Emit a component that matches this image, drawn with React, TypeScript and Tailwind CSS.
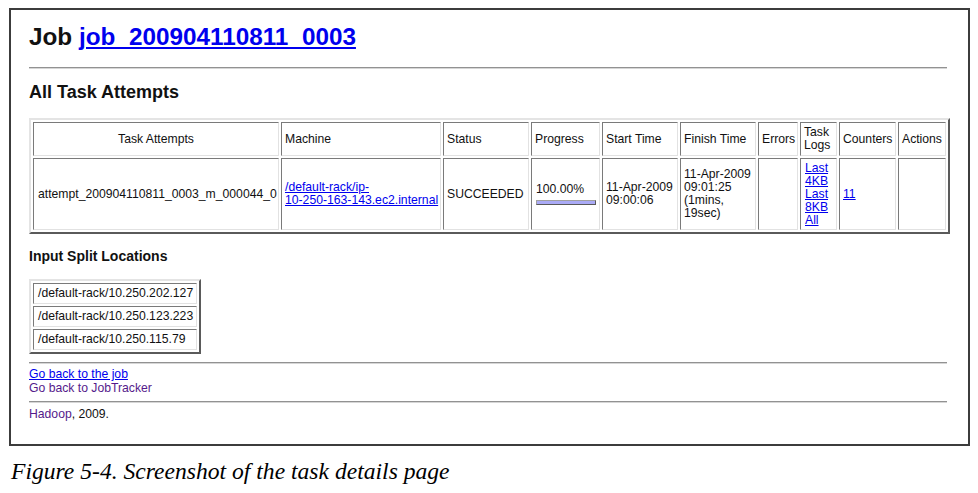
const cell =
  'border border-t-[#7a7a7a] border-l-[#7a7a7a] border-b-[#e2e2e2] border-r-[#e2e2e2] px-[3px] align-middle whitespace-nowrap'

const tableFrame =
  'border-separate border-spacing-[2px] border-2 border-t-[#e4e4e4] border-l-[#e4e4e4] border-b-[#5a5a5a] border-r-[#5a5a5a]'

const link = 'text-[#0000ee] underline'

const headers = [
  { label: 'Task Attempts', w: 'w-[246px]', center: true },
  { label: 'Machine', w: 'w-[160px]' },
  { label: 'Status', w: 'w-[86px]' },
  { label: 'Progress', w: 'w-[69px]' },
  { label: 'Start Time', w: 'w-[76px]' },
  { label: 'Finish Time', w: 'w-[76px]' },
  { label: 'Errors', w: 'w-[40px]' },
  { label: 'Task Logs', w: 'w-[37px]', wrap: true },
  { label: 'Counters', w: 'w-[57px]' },
  { label: 'Actions', w: 'w-[48px]' },
]

const splits = [
  '/default-rack/10.250.202.127',
  '/default-rack/10.250.123.223',
  '/default-rack/10.250.115.79',
]

function Rule() {
  return <div className="h-0 border-t border-b border-t-[#929292] border-b-[#d6d6d6]" />
}

export default function App() {
  return (
    <div className="min-h-screen bg-white pl-[9px] pt-[8px] font-['Liberation_Sans',Arial,sans-serif] text-[#111]">
      <div className="w-[961px] border-2 border-[#3c3c3c] pl-[18px] pr-[21px] pt-[13px] pb-[23px]">
        <h1 className="text-[24.3px] font-bold leading-[28px]">
          Job <a className={link}>job_200904110811_0003</a>
        </h1>

        <div className="mt-[16px]">
          <Rule />
        </div>

        <h2 className="mt-[12px] text-[18px] font-bold leading-[22px]">All Task Attempts</h2>

        <table className={`mt-[15px] w-[921px] table-fixed text-[12.2px] leading-[13px] ${tableFrame}`}>
          <thead>
            <tr>
              {headers.map((h) => (
                <th
                  key={h.label}
                  className={`${cell} ${h.w} h-[34px] font-normal ${h.center ? 'text-center' : 'text-left'} ${
                    h.wrap ? 'whitespace-normal' : ''
                  }`}
                >
                  {h.wrap ? (
                    <>
                      Task
                      <br />
                      Logs
                    </>
                  ) : (
                    h.label
                  )}
                </th>
              ))}
            </tr>
          </thead>
          <tbody>
            <tr>
              <td className={`${cell} h-[72px] pl-[4px]`}>attempt_200904110811_0003_m_000044_0</td>
              <td className={cell}>
                <a className={link}>
                  /default-rack/ip-
                  <br />
                  10-250-163-143.ec2.internal
                </a>
              </td>
              <td className={cell}>SUCCEEDED</td>
              <td className={`${cell} pl-[4px]`}>
                <div>100.00%</div>
                <div className="mt-[4px] w-[60px] h-[5px] border border-t-[#a0a0a0] border-l-[#a0a0a0] border-b-[#5a5a5a] border-r-[#5a5a5a] bg-[#aaaaf6]" />
              </td>
              <td className={cell}>
                11-Apr-2009
                <br />
                09:00:06
              </td>
              <td className={cell}>
                11-Apr-2009
                <br />
                09:01:25
                <br />
                (1mins,
                <br />
                19sec)
              </td>
              <td className={cell} />
              <td className={`${cell} pl-[4px]`}>
                <a className={link}>
                  Last
                  <br />
                  4KB
                </a>
                <br />
                <a className={link}>
                  Last
                  <br />
                  8KB
                </a>
                <br />
                <a className={link}>All</a>
              </td>
              <td className={cell}>
                <a className={link}>11</a>
              </td>
              <td className={cell} />
            </tr>
          </tbody>
        </table>

        <h3 className="mt-[13px] text-[14px] font-bold leading-[18px]">Input Split Locations</h3>

        <table className={`mt-[14px] text-[12.2px] leading-[13px] ${tableFrame}`}>
          <tbody>
            {splits.map((s) => (
              <tr key={s}>
                <td className={`${cell} w-[164px] h-[21px] pl-[4px]`}>{s}</td>
              </tr>
            ))}
          </tbody>
        </table>

        <div className="mt-[8px]">
          <Rule />
        </div>

        <div className="mt-[3px] text-[12.2px] leading-[14px]">
          <div>
            <a className={link}>Go back to the job</a>
          </div>
          <div>
            <a className="text-[#551a8b]">Go back to JobTracker</a>
          </div>
        </div>

        <div className="mt-[6px]">
          <Rule />
        </div>

        <p className="mt-[4px] text-[12.2px] leading-[14px]">
          <a className="text-[#551a8b]">Hadoop</a>, 2009.
        </p>
      </div>

      <p className="ml-[2px] mt-[11px] font-['Liberation_Serif',serif] text-[23.6px] italic leading-[28px] text-black">
        Figure 5-4. Screenshot of the task details page
      </p>
    </div>
  )
}
